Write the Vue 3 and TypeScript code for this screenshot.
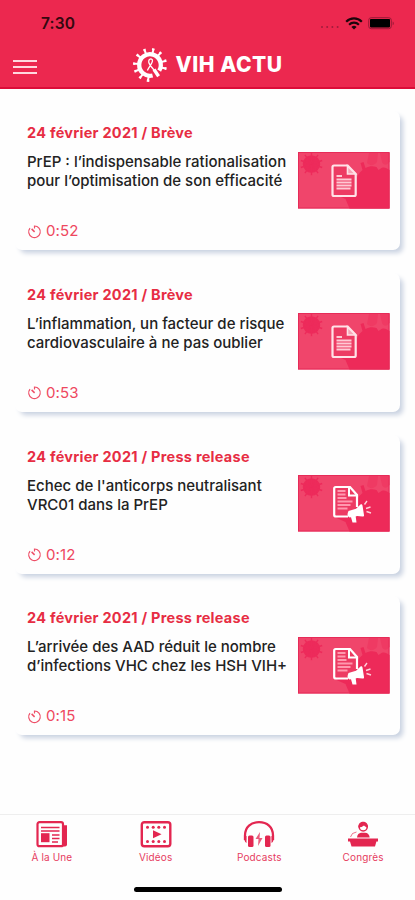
<script setup lang="ts">
interface Article {
  date: string
  kind: 'Brève' | 'Press release'
  lines: string[]
  duration: string
}

const articles: Article[] = [
  { date: '24 février 2021', kind: 'Brève', lines: ['PrEP : l’indispensable rationalisation', 'pour l’optimisation de son efficacité'], duration: '0:52' },
  { date: '24 février 2021', kind: 'Brève', lines: ['L’inflammation, un facteur de risque', 'cardiovasculaire à ne pas oublier'], duration: '0:53' },
  { date: '24 février 2021', kind: 'Press release', lines: ["Echec de l'anticorps neutralisant", 'VRC01 dans la PrEP'], duration: '0:12' },
  { date: '24 février 2021', kind: 'Press release', lines: ['L’arrivée des AAD réduit le nombre', 'd’infections VHC chez les HSH VIH+'], duration: '0:15' },
]

const spikes: number[] = [12, 41, 75, 103, 187, 218, 247, 275, 308, 340]
const burst: number[] = [0, 36, 72, 108, 144, 180, 216, 252, 288, 324]
const filmHoles: number[] = [7.5, 13.2, 18.8, 24.5]
</script>

<template>
  <div class="screen">
    <header class="header">
      <div class="status">
        <span class="clock">7:30</span>
        <div class="signals">
          <svg class="dots" width="20" height="4" viewBox="0 0 20 4" fill="#a01c3b">
            <circle cx="2" cy="2" r="1" /><circle cx="7.2" cy="2" r="1" /><circle cx="12.4" cy="2" r="1" /><circle cx="17.6" cy="2" r="1" />
          </svg>
          <svg class="wifi" width="18" height="13" viewBox="0 0 18 13" fill="none" stroke="#1c050b" stroke-width="2.2">
            <path d="M1.2 4.7a11 11 0 0 1 15.6 0M4.1 7.7a7 7 0 0 1 9.8 0" />
            <path d="M9 12.4 6.4 9.9a3.8 3.8 0 0 1 5.2 0z" fill="#1c050b" stroke="none" />
          </svg>
          <svg width="27" height="13" viewBox="0 0 27 13">
            <rect x=".7" y=".7" width="22.6" height="11" rx="2.5" fill="none" stroke="#991936" />
            <rect x="2" y="2" width="20" height="8.4" rx=".8" />
            <path d="M24.7 4.4v3.8c1.5-.5 1.5-3.3 0-3.8z" fill="#991936" />
          </svg>
        </div>
      </div>
      <div class="titlebar">
        <button class="menu" aria-label="Menu"><i /><i /><i /></button>
        <div class="brand">
          <svg width="36" height="36" viewBox="-18 -18 36 36" fill="none" stroke="#fff">
            <path d="M9.2 5.7A10.8 10.8 0 1 0 2.6 10.5" stroke-width="4.3" />
            <g stroke-width="2">
              <path v-for="a in spikes" :key="a" d="M0-10v-6M-1.3-16h2.6" :transform="`rotate(${a})`" />
            </g>
            <path d="M4 4.500 8.600 11.300" stroke-width="3.400" />
            <path d="M-2.600 5.400C-1 1.500 3.200-2.200 2.400-5.100 1.600-7-1.600-5.800-1.300-3.100-1 0 3 3.200 5.400 7" stroke-width="1.300" />
          </svg>
          <span class="name">VIH ACTU</span>
        </div>
      </div>
    </header>

    <main class="feed">
      <article v-for="a in articles" :key="a.duration" class="card">
        <div class="body">
          <p class="meta">{{ a.date }} / {{ a.kind }}</p>
          <h2 class="title"><span v-for="l in a.lines" :key="l">{{ l }}</span></h2>
          <p class="time">
            <svg width="15" height="15" viewBox="0 0 15 15" fill="none" stroke="#ee5068">
              <path d="M7.500 4.500V2A5.800 5.800 0 1 1 3 4.100" stroke-width="1.200" />
              <path d="m4.600 4.900 3 2.900" stroke-width="1.600" />
            </svg>
            <span>{{ a.duration }}</span>
          </p>
        </div>
        <svg class="thumb" width="92" height="57" viewBox="0 0 92 57">
          <rect width="91.500" height="56.500" fill="#f0456b" />
          <g fill="#ed2b5b" stroke="#ed2b5b" stroke-width="1.400">
            <circle cx="13.500" cy="12" r="8" />
            <path v-for="r in burst" :key="r" d="M13.500 12V.8" :transform="`rotate(${r} 13.500 12)`" />
          </g>
          <path d="M91.500 18c-3-2-5-3-8-2l-3 2-2-3c-4-1-7-1-11 1l-2-6-3 1 2 7c-4 3-6 7-7 12l-9 8-10 5 9 4 4 9.500h40z" fill="#ed2a59" />
          <path d="M71 1h9l-1 9c-3 4-7 4-10 1zM82 1l2 9c2 4 5 3 7.500 0V1z" fill="#ef3a63" />
          <rect x=".5" y=".5" width="90.500" height="55.500" fill="none" stroke="#e62b58" />
          <template v-if="a.kind === 'Brève'">
            <path d="M36 13.500h13.700l8 8.500v20.500q0 1.500-1.500 1.500H36q-1.500 0-1.500-1.500V15q0-1.500 1.500-1.500z" fill="#ed3b63" stroke="#ffe3e8" stroke-width="2.200" />
            <path d="M49.500 14v8h8z" fill="#f8a3b5" stroke="#ffe3e8" stroke-width="1.600" />
            <path d="M38.500 24h5.500M38.500 27.500h15M38.500 30.500h15M38.500 33.500h15M38.500 36.500h14" stroke="#ffc9d4" stroke-width="2.200" />
          </template>
          <template v-else>
            <path d="M50 41.500H38q-1.800 0-1.800-1.500V13.500q0-1.500 1.500-1.500H52l7 8v12" fill="#ed3b63" stroke="#fff" stroke-width="2.200" />
            <path d="M51 12v8.500h8" fill="none" stroke="#fff" stroke-width="2" />
            <path d="M39.500 16h8M39.500 19.500h8M39.500 23h9M39.500 26.500h15M39.500 30h13M39.500 33.500h10" stroke="#ff98ae" stroke-width="2" />
            <path d="m50.500 36 7.500-2.300 4.500-4.200c1-.6 1.700 0 2 1l1.500 9.500c.2 1.200-.5 1.700-1.500 1.500l-5.500-.5-1.300.4.8 6.100h-4l-1.500-5.300-1.500.2q-3.400-1.400-1-6.400z" fill="#fff" />
            <path d="m66.500 29.500 2.500-3.500M68 33.500l4.500-1.500M68.500 36.500l4.500 1.500" stroke="#ffd0da" stroke-width="1.400" />
          </template>
        </svg>
      </article>
    </main>

    <nav class="tabs">
      <a class="tab">
        <svg width="32" height="28" viewBox="0 0 32 28" fill="none" stroke="#e32650">
          <path d="M27 5.300h4V24.500q0 2-2 2H27z" fill="#e32650" stroke="none" />
          <rect x="1.500" y="2.200" width="25.500" height="24" rx="2" stroke-width="2.200" />
          <path d="M5 7.500h18.500M5 11h18.500M16 15h7.500M16 18.500h7.500M16 22h6" stroke-width="1.600" />
          <rect x="5" y="13.200" width="8.500" height="9" fill="#e32650" stroke="none" />
        </svg>
        <span>À la Une</span>
      </a>
      <a class="tab">
        <svg width="32" height="28" viewBox="0 0 32 28" fill="#e32650">
          <rect x="1.800" y="2.200" width="28.500" height="24" rx="2.500" fill="none" stroke="#e32650" stroke-width="2.400" />
          <template v-for="x in filmHoles" :key="x">
            <circle :cx="x" cy="7.300" r="1.500" /><circle :cx="x" cy="21.500" r="1.500" />
          </template>
          <path d="m13 10.300 8.500 4-8.500 4z" />
        </svg>
        <span>Vidéos</span>
      </a>
      <a class="tab">
        <svg width="32" height="28" viewBox="0 0 32 28" fill="#e32650">
          <path d="M2 20v-4.500C2 7 8 2.200 16 2.200S30 7 30 15.500V20" fill="none" stroke="#e32650" stroke-width="2.300" />
          <rect x="5" y="15.500" width="5.500" height="11.500" rx="1.500" /><rect x="22" y="15.500" width="5.500" height="11.500" rx="1.500" />
          <path d="M1 16h2.500v7C1.500 22 1 19 1 16zM31 16h-2.500v7c2-1 2.500-4 2.500-7z" />
          <path d="m17 12-4.500 7h3l-.5 7 4.500-8h-3z" opacity=".75" />
        </svg>
        <span>Podcasts</span>
      </a>
      <a class="tab">
        <svg width="32" height="28" viewBox="0 0 32 28" fill="#e32650">
          <path d="M1 18.500h30v3h-1.600L28 26.500H4.500L3 21.500H1z" />
          <path d="M10 17.500c.2-3 2-4.600 4-4.800h4c2.500 0 4.400 1.800 4.700 4.800z" />
          <circle cx="16.200" cy="7" r="4" fill="#fff" stroke="#e32650" stroke-width="1.500" />
          <path d="M11.300 7.500c-.5-7.800 10.200-7.800 9.700 0-2-.2-3-1-4-2-1.500 1.300-3 2-5.700 2z" />
          <path d="m3.500 17 2-3.500 4-1.500" fill="none" stroke="#e32650" opacity=".65" />
        </svg>
        <span>Congrès</span>
      </a>
    </nav>
    <div class="home"><i /></div>
  </div>
</template>

<style>
body { background: #fefefe; }
</style>

<style scoped>
.screen { width: 415px; height: 900px; display: flex; flex-direction: column; overflow: hidden; background: #fefefe; font-family: Inter, "Liberation Sans", sans-serif; }
.screen, .screen * { box-sizing: border-box; }
p, h2 { margin: 0; }
.header { flex: none; height: 88.500px; background: #ec284f; border-bottom: 2px solid #dc0c38; }
.status { height: 46px; display: flex; justify-content: space-between; padding: 13px 20px 0 41px; }
.clock { font-size: 15.500px; line-height: 21px; font-weight: 600; letter-spacing: .2px; color: #35080f; }
.signals { display: flex; height: 13px; margin-top: 3.500px; }
.dots { margin: 8.500px 5px 0 0; }
.wifi { margin-right: 5px; }
.titlebar { display: flex; align-items: flex-start; padding-left: 13px; }
.menu { width: 24px; padding: 0; margin-top: 14px; border: 0; background: none; display: flex; flex-direction: column; gap: 4px; }
.menu i { height: 2px; background: #ffd9df; }
.brand { display: flex; align-items: center; margin-left: 95px; }
.name { margin-left: 7.500px; color: #fff; font-size: 21px; line-height: 37px; font-weight: 800; letter-spacing: .55px; white-space: nowrap; }
.feed { flex: 1; display: flex; flex-direction: column; gap: 22.800px; padding: 22.500px 0 0 15px; }
.card { width: 384.500px; height: 139px; flex: none; display: flex; padding: 12px 10.500px 0 12px; border-radius: 7px; background: #fefefe; box-shadow: 4px 4px 5px -1px #c8d1e0; }
.body { width: 270.500px; flex: none; display: flex; flex-direction: column; white-space: nowrap; }
.meta { color: #e72d43; font-size: 14.500px; line-height: 19px; font-weight: 700; letter-spacing: .26px; }
.title { margin-top: 10px; font-size: 15px; line-height: 19px; font-weight: 500; color: #222; }
.title span { display: block; width: max-content; }
.time { display: flex; align-items: center; gap: 4px; margin-top: 31px; color: #ee4860; font-size: 15px; line-height: 20px; letter-spacing: .1px; }
.thumb { flex: none; margin-top: 28.500px; }
.tabs { flex: none; height: 65px; display: grid; grid-template-columns: repeat(4, 1fr); border-top: 1px solid #eee; }
.tab { display: flex; flex-direction: column; align-items: center; padding-top: 5px; color: #e63c5f; font-size: 10px; line-height: 15px; letter-spacing: .15px; }
.tab span { margin-top: 2px; }
.home { flex: none; height: 21px; display: flex; justify-content: center; padding-top: 8px; }
.home i { width: 148px; height: 4.500px; border-radius: 3px; background: #000; }
</style>
